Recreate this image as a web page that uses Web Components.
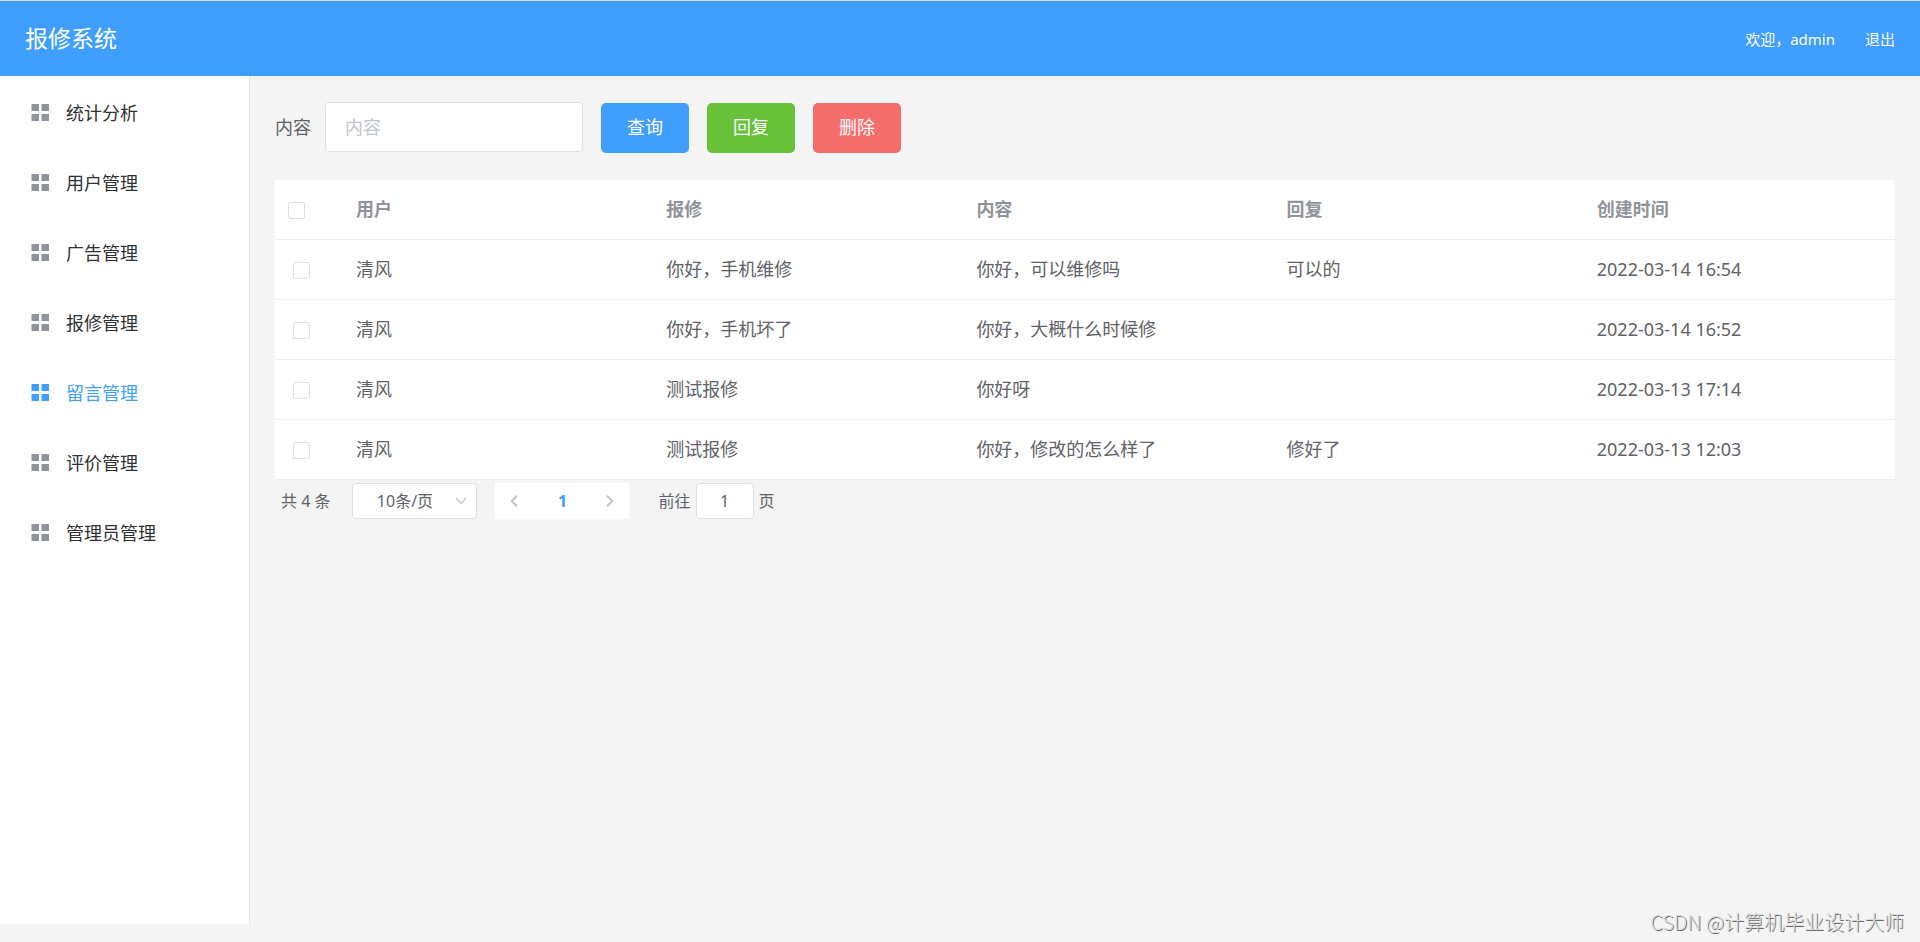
<!DOCTYPE html>
<html lang="zh-CN">
<head>
<meta charset="utf-8">
<title>报修系统</title>
<style>
  :root {
    --primary: #409eff;
    --success: #67c23a;
    --danger: #f56c6c;
    --text: #606266;
    --heading: #303133;
    --muted: #909399;
    --placeholder: #c0c4cc;
    --border: #dcdfe6;
    --line: #ebeef5;
    --page: #f4f4f4;
  }
  body {
    margin: 0;
    background: var(--page);
    color: var(--text);
    font-family: "Noto Sans", "Noto Sans CJK SC", sans-serif;
    font-size: 18px;
    line-height: 24px;
  }
</style>
</head>
<body>
<repair-app></repair-app>

<script>
  const define = (name, html, setup) => {
    const tpl = document.createElement('template');
    tpl.innerHTML = html;
    customElements.define(name, class extends HTMLElement {
      constructor() {
        super();
        this.attachShadow({ mode: 'open' }).appendChild(tpl.content.cloneNode(true));
      }
      connectedCallback() {
        if (setup) setup(this, this.shadowRoot);
      }
    });
  };

  define('app-header', `
    <style>
      :host { display: block; border-top: 1px solid #d5dbe1; }
      header {
        display: flex; align-items: center; justify-content: space-between;
        height: 75px; padding: 0 25px; box-sizing: border-box;
        background: var(--primary); color: #fff;
      }
      h1 { margin: 0; padding-bottom: 2px; font-size: 23px; font-weight: 400; line-height: 32px; }
      .user { display: flex; gap: 30px; font-size: 15px; }
      a { color: inherit; text-decoration: none; }
    </style>
    <header>
      <h1>报修系统</h1>
      <div class="user"><span>欢迎，admin</span><a href="#logout">退出</a></div>
    </header>`);

  define('menu-item', `
    <style>
      :host { display: block; color: var(--heading); --icon: var(--muted); }
      :host([active]) { color: var(--primary); --icon: var(--primary); }
      a {
        display: flex; align-items: center; gap: 17px;
        height: 70px; padding: 4px 25px 0 31px; box-sizing: border-box;
        color: inherit; text-decoration: none;
      }
      svg { display: block; width: 18px; height: 18px; fill: var(--icon); }
    </style>
    <a href="#">
      <svg viewBox="0 0 18 18" aria-hidden="true"><path d="M0.5 0h7.5v7h-7.5zM10.5 0h7.5v7h-7.5zM0.5 10h7.5v7h-7.5zM10.5 10h7.5v7h-7.5z"/></svg>
      <slot></slot>
    </a>`);

  define('side-menu', `
    <style>
      :host { display: block; box-sizing: border-box; width: 250px; background: #fff; border-right: 1px solid #e6e6e6; }
    </style>
    <nav><slot></slot></nav>`);

  define('ui-button', `
    <style>
      :host { display: block; --fill: var(--primary); }
      :host([type="success"]) { --fill: var(--success); }
      :host([type="danger"]) { --fill: var(--danger); }
      button {
        display: block; height: 50px; padding: 0 26px 2px; border: 0; border-radius: 5px;
        background: var(--fill); color: #fff; font: inherit; cursor: pointer;
      }
    </style>
    <button type="button"><slot></slot></button>`);

  define('search-bar', `
    <style>
      :host { display: flex; align-items: flex-end; gap: 18px; }
      .field { display: flex; align-items: center; gap: 14px; padding-bottom: 1px; }
      input {
        width: 258px; height: 50px; padding: 0 19px; box-sizing: border-box;
        border: 1px solid var(--border); border-radius: 5px; background: #fff;
        color: var(--text); font: inherit; outline: none;
      }
      input::placeholder { color: var(--placeholder); opacity: 1; }
    </style>
    <div class="field"><label for="content">内容</label><input id="content" type="text" placeholder="内容"></div>
    <ui-button>查询</ui-button>
    <ui-button type="success">回复</ui-button>
    <ui-button type="danger">删除</ui-button>`);

  define('message-table', `
    <style>
      :host { display: block; background: #fff; }
      table { width: 100%; border-collapse: separate; border-spacing: 0; table-layout: fixed; }
      th, td { height: 57px; padding: 0 12px 2px; border-bottom: 1px solid var(--line); text-align: left; }
      th { color: var(--muted); font-weight: 700; }
      .pick { width: 45px; }
      th.pick { padding-left: 13px; padding-right: 11px; }
      td.pick { padding-left: 18px; padding-right: 6px; }
      input {
        display: block; appearance: none; width: 17px; height: 17px; margin: 4px 0 0; box-sizing: border-box;
        border: 1px solid var(--border); border-radius: 2px; background: #fff;
      }
      input:checked { background: var(--primary); border-color: var(--primary); }
    </style>
    <table>
      <thead><tr>
        <th class="pick"><input type="checkbox" aria-label="全选"></th>
        <th>用户</th><th>报修</th><th>内容</th><th>回复</th><th>创建时间</th>
      </tr></thead>
      <tbody></tbody>
    </table>`,
    (host, root) => {
      const rows = [
        ['清风', '你好，手机维修', '你好，可以维修吗', '可以的', '2022-03-14 16:54'],
        ['清风', '你好，手机坏了', '你好，大概什么时候修', '', '2022-03-14 16:52'],
        ['清风', '测试报修', '你好呀', '', '2022-03-13 17:14'],
        ['清风', '测试报修', '你好，修改的怎么样了', '修好了', '2022-03-13 12:03']
      ];
      root.querySelector('tbody').innerHTML = rows.map(r =>
        '<tr><td class="pick"><input type="checkbox" aria-label="选择"></td>' +
        r.map(c => `<td>${c}</td>`).join('') + '</tr>').join('');
      const [all, ...each] = root.querySelectorAll('input');
      all.onchange = () => each.forEach(box => { box.checked = all.checked; });
    });

  define('page-bar', `
    <style>
      :host { display: flex; align-items: center; padding: 3px 6px; font-size: 16px; }
      .size { display: grid; align-items: center; width: 125px; margin: 0 18px 0 22px; }
      .size > * { grid-area: 1 / 1; }
      .size svg { justify-self: end; margin-right: 10px; pointer-events: none; }
      select, input {
        height: 36px; box-sizing: border-box; border: 1px solid var(--border); border-radius: 4px;
        background: #fff; color: var(--text); font: inherit; outline: none;
      }
      select { appearance: none; width: 100%; padding: 0 20px 0 0; text-align: center; text-align-last: center; }
      input { width: 58px; padding: 0 4px; text-align: center; }
      .pager { display: flex; background: #fff; }
      .pager button {
        display: grid; place-items: center; width: 38px; height: 36px; padding: 0;
        border: 0; background: none; font: inherit;
      }
      .pager .current { width: 58px; color: var(--primary); font-weight: 700; }
      svg { display: block; fill: none; stroke: var(--placeholder); }
      label { display: flex; align-items: center; gap: 5px; margin-left: 29px; }
    </style>
    <span>共 4 条</span>
    <div class="size">
      <select aria-label="每页条数"><option>10条/页</option><option>20条/页</option><option>50条/页</option></select>
      <svg width="12" height="8" viewBox="0 0 12 8" stroke-width="1.2"><path d="M1 1l5 5.5L11 1"/></svg>
    </div>
    <div class="pager">
      <button type="button" aria-label="上一页" disabled><svg width="8" height="12" viewBox="0 0 8 12" stroke-width="2"><path d="M7 .7L1.7 6L7 11.3"/></svg></button>
      <button type="button" class="current">1</button>
      <button type="button" aria-label="下一页" disabled><svg width="8" height="12" viewBox="0 0 8 12" stroke-width="2"><path d="M1 .7L6.3 6L1 11.3"/></svg></button>
    </div>
    <label><span>前往</span><input type="text" value="1"><span>页</span></label>`);

  define('repair-app', `
    <style>
      :host { display: flex; flex-direction: column; box-sizing: border-box; min-height: 100vh; padding-bottom: 18px; position: relative; }
      .body { display: flex; flex: 1; }
      main { flex: 1; min-width: 0; padding: 26px 25px; }
      search-bar { margin-bottom: 27px; }
      .mark {
        position: absolute; right: 16px; bottom: 6px; font-size: 20px; line-height: 28px;
        font-family: "Noto Sans CJK SC", sans-serif; font-weight: 300;
        color: #dcdcdc; text-shadow: 1px 1px 0 #6c6c6c; pointer-events: none;
      }
    </style>
    <app-header></app-header>
    <div class="body">
      <side-menu>
        <menu-item>统计分析</menu-item>
        <menu-item>用户管理</menu-item>
        <menu-item>广告管理</menu-item>
        <menu-item>报修管理</menu-item>
        <menu-item active>留言管理</menu-item>
        <menu-item>评价管理</menu-item>
        <menu-item>管理员管理</menu-item>
      </side-menu>
      <main>
        <search-bar></search-bar>
        <message-table></message-table>
        <page-bar></page-bar>
      </main>
    </div>
    <div class="mark">CSDN @计算机毕业设计大师</div>`);
</script>
</body>
</html>
